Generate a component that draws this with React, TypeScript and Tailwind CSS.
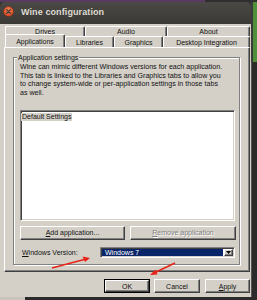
import React from "react";

const raised =
  "border border-t-white border-l-white border-r-[#404040] border-b-[#404040] shadow-[inset_-1px_-1px_0_#808080]";
const sunken =
  "border border-t-[#808080] border-l-[#808080] border-r-white border-b-white shadow-[inset_1px_1px_0_#404040,inset_-1px_-1px_0_#d4d0c8]";

function Tab({ w, label, selected }: { w: string; label: string; selected?: boolean }) {
  if (selected) {
    return (
      <div
        className={`${w} relative z-10 -mt-[2px] h-[13px] -mb-[1px] flex items-center justify-center bg-[#d4d0c8] border border-b-0 border-t-white border-l-white border-r-[#404040] rounded-t-[2px] shadow-[inset_-1px_0_0_#808080]`}
      >
        <span className="leading-none">{label}</span>
      </div>
    );
  }
  return (
    <div
      className={`${w} h-full flex items-center justify-center bg-[#d4d0c8] border border-b-0 border-t-white border-l-white border-r-[#404040] rounded-t-[2px] shadow-[inset_-1px_0_0_#808080]`}
    >
      <span className="leading-none">{label}</span>
    </div>
  );
}

function Button({
  w,
  children,
  disabled,
  def,
}: {
  w: string;
  children: React.ReactNode;
  disabled?: boolean;
  def?: boolean;
}) {
  if (def) {
    return (
      <div className={`${w} h-[14px] border border-black bg-[#d4d0c8]`}>
        <div className={`h-full w-full flex items-center justify-center ${raised}`}>
          <span className="leading-none">{children}</span>
        </div>
      </div>
    );
  }
  return (
    <div className={`${w} h-[14px] flex items-center justify-center bg-[#d4d0c8] ${raised}`}>
      <span
        className={`leading-none ${
          disabled ? "text-[#808080] [text-shadow:1px_1px_0_#ffffff]" : ""
        }`}
      >
        {children}
      </span>
    </div>
  );
}

export default function App() {
  return (
    <div className="relative w-[257px] h-[300px] overflow-hidden bg-[#333333] font-['Liberation_Sans',Arial,sans-serif] text-[7px] text-[#111111]">
      <div className="flex h-[297px]">
        {/* window */}
        <div className="w-[251px] flex flex-col">
          <div className="h-[2px] flex">
            <div className="w-[205px] bg-[#5b3a62]" />
            <div className="flex-1 bg-[#2f2f2f]" />
          </div>
          {/* title bar */}
          <div className="h-[22px] rounded-t-[5px] flex items-start pt-[4px] pl-[3px] bg-[linear-gradient(#4a4945,#3a3935)]">
            <svg width="11" height="11" viewBox="0 0 11 11" className="-mt-[0.5px]">
              <defs>
                <radialGradient id="cg" cx="50%" cy="35%" r="60%">
                  <stop offset="0%" stopColor="#f4864f" />
                  <stop offset="100%" stopColor="#d9482a" />
                </radialGradient>
              </defs>
              <circle cx="5.5" cy="5.5" r="5" fill="url(#cg)" stroke="#7a2e16" strokeWidth="0.6" />
              <path d="M3.6 3.6 L7.4 7.4 M7.4 3.6 L3.6 7.4" stroke="#3c3b37" strokeWidth="1.3" strokeLinecap="round" />
            </svg>
            <span className="ml-[7px] mt-[1px] text-[9px] font-bold text-[#dfdbd2] leading-[10px] tracking-[0.1px]">
              Wine configuration
            </span>
          </div>
          {/* body */}
          <div className="h-[273px] bg-[#d4d0c8] pl-[4px] pt-[2px] flex flex-col">
            {/* tabs */}
            <div className="h-[21px] ml-[1px] flex flex-col">
              <div className="h-[10px] flex">
                <Tab w="w-[80px]" label="Drives" />
                <Tab w="w-[82px]" label="Audio" />
                <Tab w="w-[83px]" label="About" />
              </div>
              <div className="h-[11px] flex">
                <Tab w="w-[60px]" label="Applications" selected />
                <Tab w="w-[49px]" label="Libraries" />
                <Tab w="w-[49px]" label="Graphics" />
                <Tab w="w-[87px]" label="Desktop Integration" />
              </div>
            </div>
            {/* panel */}
            <div className={`w-[246px] h-[225px] ${raised} pl-[8px] pt-[9px]`}>
              <div className="relative w-[227px] h-[208px] border border-[#808080] shadow-[inset_1px_1px_0_#ffffff,1px_1px_0_#ffffff] pl-[6px] pt-[5px] flex flex-col">
                <span className="absolute -top-[5px] left-[3px] bg-[#d4d0c8] px-[1px] leading-[9px]">
                  Application settings
                </span>
                <p className="leading-[8.7px] w-[218px] text-[7.1px] whitespace-nowrap">
                  Wine can mimic different Windows versions for each application.
                  <br />
                  This tab is linked to the Libraries and Graphics tabs to allow you
                  <br />
                  to change system-wide or per-application settings in those tabs
                  <br />
                  as well.
                </p>
                <div className={`mt-[12px] w-[215px] h-[111px] bg-white ${sunken} pt-[1px]`}>
                  <div className="inline-block bg-[#d4d0c8] px-[1px] h-[8.5px] leading-[8.5px]">
                    Default Settings
                  </div>
                </div>
                <div className="mt-[5px] flex">
                  <Button w="w-[105px]">
                    <span className="underline">A</span>dd application...
                  </Button>
                  <div className="w-[5px]" />
                  <Button w="w-[106px]" disabled>
                    <span className="underline">R</span>emove application
                  </Button>
                </div>
                <div className="mt-[7px] h-[11px] flex items-center">
                  <div className="w-[80px] pl-[2px] leading-none">
                    <span className="underline">W</span>indows Version:
                  </div>
                  <div className={`w-[135px] h-[11px] bg-white ${sunken} flex p-[1px]`}>
                    <div className="flex-1 bg-[#0a246a] text-white leading-[7px] pl-[3px]">
                      Windows 7
                    </div>
                    <div className={`w-[9px] bg-[#d4d0c8] ${raised} flex items-center justify-center ml-[1px]`}>
                      <svg width="5" height="3" viewBox="0 0 5 3">
                        <path d="M0 0 H5 L2.5 3 Z" fill="#000" />
                      </svg>
                    </div>
                  </div>
                </div>
              </div>
            </div>
            {/* bottom buttons */}
            <div className="mt-[7px] flex pl-[100px]">
              <Button w="w-[46px]" def>
                OK
              </Button>
              <div className="w-[4px]" />
              <Button w="w-[46px]">Cancel</Button>
              <div className="w-[5px]" />
              <Button w="w-[45px]">
                <span className="underline">A</span>pply
              </Button>
            </div>
          </div>
        </div>
        {/* right strip */}
        <div className="flex-1 flex flex-col">
          <div className="h-[2px] bg-[#2f2f2f]" />
          <div className="h-[60px] bg-[linear-gradient(90deg,#3a3a3a_0px,#3a3a3a_2px,#4f8f3a_2px)]" />
          <div className="flex-1 bg-[linear-gradient(90deg,#555555_0px,#555555_1px,#2b2b2b_1px)]" />
        </div>
      </div>
      <div className="h-[3px] flex">
        <div className="w-[25px] bg-[#c9c5bd]" />
        <div className="flex-1 bg-[#2a2a2a]" />
      </div>
      {/* arrows overlay */}
      <svg className="absolute left-0 top-0 pointer-events-none" width="257" height="300">
        <line x1="52" y1="268" x2="88" y2="258.5" stroke="#e8241a" strokeWidth="1.6" />
        <path d="M90 258 L82.5 256.5 L85 262 Z" fill="#e8241a" />
        <line x1="175" y1="263" x2="152" y2="274" stroke="#e8241a" strokeWidth="1.6" />
        <path d="M150 275 L155.5 269.5 L157.5 274.5 Z" fill="#e8241a" />
      </svg>
    </div>
  );
}
